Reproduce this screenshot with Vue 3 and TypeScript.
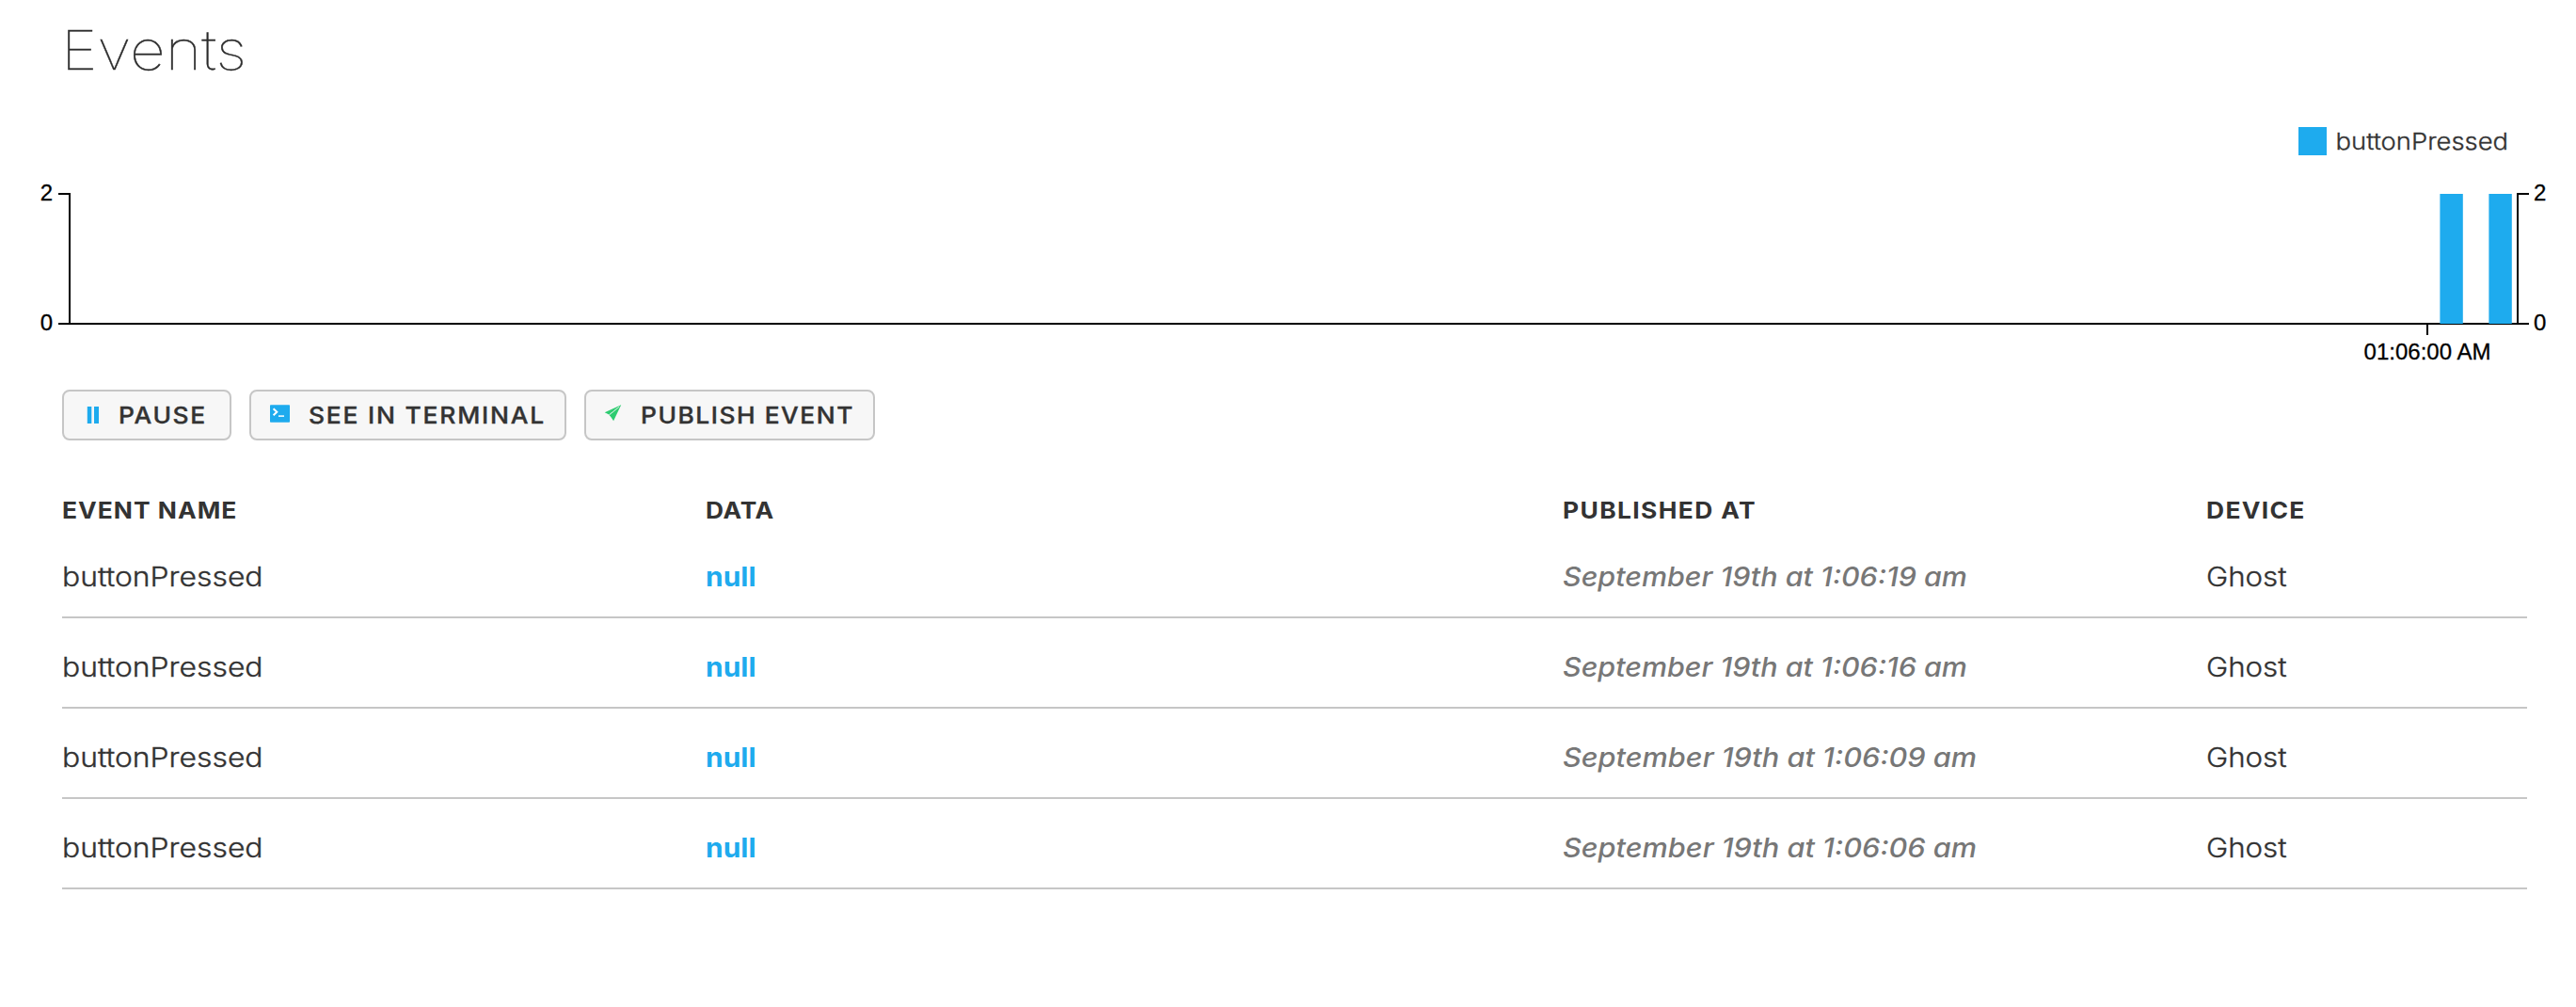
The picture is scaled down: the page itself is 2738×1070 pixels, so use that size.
<script setup lang="ts">
interface EventRow {
  name: string
  data: string
  published: string
  device: string
  wide?: boolean
}

const events: EventRow[] = [
  { name: 'buttonPressed', data: 'null', published: 'September 19th at 1:06:19 am', device: 'Ghost' },
  { name: 'buttonPressed', data: 'null', published: 'September 19th at 1:06:16 am', device: 'Ghost' },
  { name: 'buttonPressed', data: 'null', published: 'September 19th at 1:06:09 am', device: 'Ghost', wide: true },
  { name: 'buttonPressed', data: 'null', published: 'September 19th at 1:06:06 am', device: 'Ghost', wide: true },
]

const bars: number[] = [2593.4, 2645.4]
</script>

<template>
  <main class="page">
    <h1 class="title">Events</h1>

    <svg class="chart" viewBox="0 105 2738 309" width="2738" height="309">
      <rect x="2443" y="135" width="30" height="30" fill="#1eabee" />
      <text class="legend" transform="translate(2482.5 159) scale(1.142 1)">buttonPressed</text>
      <g fill="none" stroke="#000" stroke-width="2">
        <path d="M62 206H74V344H62" />
        <path d="M2688 206H2676V344H2688" />
        <path d="M74 344H2676M2580 344V356" />
      </g>
      <rect v-for="x in bars" :key="x" :x="x" y="206" width="24.4" height="138" fill="#1eabee" />
      <g class="axis">
        <text x="56" y="212.5" text-anchor="end">2</text>
        <text x="56" y="351" text-anchor="end">0</text>
        <text x="2693" y="212.5">2</text>
        <text x="2693" y="351">0</text>
        <text x="2580" y="382" text-anchor="middle">01:06:00 AM</text>
      </g>
    </svg>

    <div class="actions">
      <button class="btn pause">
        <svg width="14" height="18" viewBox="0 0 14 18"><path d="M.8 0H5.3V18H.8zM8 0h5v18H8z" fill="#1eabee" /></svg>
        <span>PAUSE</span>
      </button>
      <button class="btn terminal">
        <svg width="21" height="19" viewBox="0 0 21 19">
          <rect y=".3" width="21" height="18.5" rx=".8" fill="#1eabee" />
          <path d="M3.6 4.2L7.3 7.7L3.6 11.2" fill="none" stroke="#fff" stroke-width="2" />
          <path d="M9 12.1H15" stroke="#fff" stroke-width="1.5" />
        </svg>
        <span>SEE IN TERMINAL</span>
      </button>
      <button class="btn publish">
        <svg width="19" height="18" viewBox="0 0 19 18">
          <path d="M18.2 .2L.7 8.2L5.3 10.6zM18.2 .2L6.1 11.2L10.1 17.2z" fill="#2ecc71" />
          <path d="M18.2 .2L5.2 10.7L7.7 13z" fill="#2ecc71" />
          <path d="M16.2 2.2L5.6 10.9" stroke="#f7f7f7" stroke-width=".8" />
        </svg>
        <span>PUBLISH EVENT</span>
      </button>
    </div>

    <section class="table">
      <div class="row head">
        <span class="h-name">EVENT NAME</span>
        <span class="h-data">DATA</span>
        <span class="h-published">PUBLISHED AT</span>
        <span class="h-device">DEVICE</span>
      </div>
      <div v-for="event in events" :key="event.published" class="row item">
        <span class="name">{{ event.name }}</span>
        <span class="data">{{ event.data }}</span>
        <span class="published" :class="{ wide: event.wide }">{{ event.published }}</span>
        <span class="device">{{ event.device }}</span>
      </div>
    </section>
  </main>
</template>

<style>
body {
  background: #fff;
}
</style>

<style scoped>
.page {
  width: 2738px;
  height: 1070px;
  overflow: hidden;
  font-family: Inter, sans-serif;
  color: #333;
}
.title {
  box-sizing: border-box;
  margin: 0 0 0 65px;
  padding-top: 2px;
  width: 300px;
  height: 105px;
  font-size: 58px;
  font-weight: 100;
  line-height: 103px;
  color: #2b2b2b;
  -webkit-text-stroke: 0.4px #2b2b2b;
  transform: scaleX(1.136);
  transform-origin: 0 50%;
}
.chart {
  display: block;
}
.legend {
  font-size: 24px;
  font-weight: 300;
  fill: #333;
  stroke: #333;
  stroke-width: 0.3px;
}
.axis {
  font-family: 'Liberation Sans', sans-serif;
  font-size: 24px;
  fill: #000;
  stroke: #000;
  stroke-width: 0.3px;
}
.actions {
  display: flex;
  gap: 19px;
  padding-left: 66px;
}
.btn {
  box-sizing: border-box;
  display: flex;
  align-items: center;
  height: 54px;
  padding: 0;
  border: 2px solid #c6c6c6;
  border-radius: 8px;
  background: #f7f7f7;
  color: #333;
  font: 500 24px Inter, sans-serif;
  white-space: nowrap;
}
.btn svg {
  flex: none;
}
.btn span {
  -webkit-text-stroke: 0.35px #333;
  transform: scaleX(1.1);
  transform-origin: 0 50%;
}
.pause {
  width: 180px;
  padding-left: 24px;
  letter-spacing: 1.5px;
}
.pause span {
  margin-left: 19.5px;
}
.terminal {
  width: 337px;
  padding-left: 20px;
  letter-spacing: 1.62px;
}
.terminal svg {
  margin-bottom: 3px;
}
.terminal span {
  margin-left: 20px;
}
.publish {
  width: 309px;
  padding-left: 19px;
  letter-spacing: 1.36px;
}
.publish svg {
  margin-bottom: 4px;
}
.publish span {
  margin-left: 19.5px;
}
.table {
  margin: 51px 52px 0 66px;
}
.row {
  display: grid;
  grid-template-columns: 684px 911px 684px 1fr;
}
.row span {
  transform: scaleX(1.1);
  transform-origin: 0 50%;
}
.head {
  height: 42px;
  font-size: 24px;
  font-weight: 700;
  line-height: 48px;
}
.h-name {
  letter-spacing: 0.92px;
}
.h-data {
  letter-spacing: 0.6px;
}
.h-published {
  letter-spacing: 1.24px;
}
.h-device {
  letter-spacing: 1.2px;
}
.item {
  padding: 30px 0 20px;
  border-bottom: 2px solid #c6c6c6;
  font-size: 28px;
  line-height: 44px;
}
.row .name {
  font-weight: 300;
  -webkit-text-stroke: 0.35px #333;
  transform: scaleX(1.138);
}
.row .data {
  color: #1eabee;
  font-weight: 700;
  transform: scaleX(1.07);
}
.row .published {
  color: #777;
  font-style: italic;
  font-weight: 500;
  transform: scaleX(1.088);
}
.row .published.wide {
  transform: scaleX(1.096);
}
.row .device {
  font-weight: 300;
  -webkit-text-stroke: 0.35px #333;
  transform: scaleX(1.115);
}
</style>
